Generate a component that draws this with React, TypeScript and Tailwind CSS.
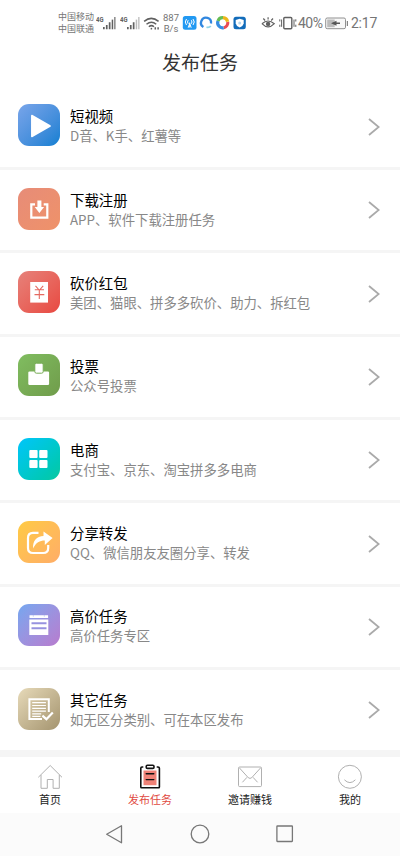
import React from 'react';

type Kind = 'video' | 'download' | 'packet' | 'vote' | 'shop' | 'share' | 'premium' | 'other';

const tasks: { kind: Kind; title: string; detail: string; tile: string }[] = [
  { kind: 'video', title: '短视频', detail: 'D音、K手、红薯等', tile: 'from-[#78a5ea] to-[#087fd2]' },
  { kind: 'download', title: '下载注册', detail: 'APP、软件下载注册任务', tile: 'from-[#e78c78] to-[#ef9269]' },
  { kind: 'packet', title: '砍价红包', detail: '美团、猫眼、拼多多砍价、助力、拆红包', tile: 'from-[#e6817a] to-[#e84740]' },
  { kind: 'vote', title: '投票', detail: '公众号投票', tile: 'from-[#80bd60] to-[#709c4b]' },
  { kind: 'shop', title: '电商', detail: '支付宝、京东、淘宝拼多多电商', tile: 'from-[#00c5fb] to-[#0bc8a0]' },
  { kind: 'share', title: '分享转发', detail: 'QQ、微信朋友友圈分享、转发', tile: 'from-[#ffca42] to-[#ffad67]' },
  { kind: 'premium', title: '高价任务', detail: '高价任务专区', tile: 'from-[#73a7f0] to-[#b77bce]' },
  { kind: 'other', title: '其它任务', detail: '如无区分类别、可在本区发布', tile: 'from-[#e7dab9] to-[#a4946f]' },
];

function Glyph({ kind }: { kind: Kind }) {
  return (
    <svg viewBox="0 0 42 42" className="block size-[42px]" fill="none" stroke="white" strokeWidth="2">
      {kind === 'video' && <path d="M13.8 11.5v21l18.3-10.5z" fill="white" strokeWidth="1.5" strokeLinejoin="round" />}
      {kind === 'download' && (
        <>
          <path d="M17 16.3h-3.7v13.4h16V16.3h-3.6" strokeWidth="2.2" />
          <path d="M19.4 12.4h4v6.6h2.7L21.4 25l-4.7-6h2.7z" fill="white" stroke="none" />
        </>
      )}
      {kind === 'packet' && (
        <>
          <path d="M12.2 11h17.8v20.6H12.2z" fill="white" stroke="none" />
          <path d="m17.5 14.8 3.2 3.7M25.2 14.8l-3.2 3.7M16.8 18.8h9.2M16.5 23.6h9.8M21.3 18.5v9.5" stroke="#e56a61" strokeWidth="1.1" />
        </>
      )}
      {kind === 'vote' && (
        <>
          <rect x="10.3" y="17.6" width="20.8" height="13.3" rx="1.2" fill="white" stroke="none" />
          <rect x="16.8" y="9.2" width="8.4" height="10" rx="1.6" fill="white" stroke="#76ac54" strokeWidth="1" />
        </>
      )}
      {kind === 'shop' && (
        <g fill="white" stroke="none">
          <rect x="11.3" y="12" width="8.3" height="7.9" rx="1" />
          <rect x="21.2" y="12" width="8.3" height="7.9" rx="1" />
          <rect x="11.3" y="21.9" width="8.3" height="8" rx="1" />
          <rect x="21.2" y="21.9" width="8.3" height="8" rx="1" />
        </g>
      )}
      {kind === 'share' && (
        <>
          <path d="M20.5 11.9H15q-5 0-5 5v10.1q0 5 5 5h10.2q5 0 5-5V24" strokeWidth="2.2" />
          <path d="M25.5 10.6 34.6 17l-7.8 6.9v-4.4c-5 0-9 1.8-11.6 8-.9-7.7 3.6-12.5 10.3-12.6z" fill="white" stroke="none" />
        </>
      )}
      {kind === 'premium' && (
        <>
          <path d="M11.5 11.3h18.6v2.8H11.5zM11.3 15.4h19v15.5h-19z" fill="white" stroke="none" />
          <path d="M15.3 11.3v1.2m11-1.2v1.2" stroke="#b6c2ee" strokeWidth="1" />
          <path d="M13.5 19.2h15M13.5 24.3h15" stroke="#9792df" strokeWidth="1.9" />
        </>
      )}
      {kind === 'other' && (
        <>
          <path d="M24 31H11.4V11.2h19.4V24" />
          <path d="M14.2 14.7h13.7M14.2 17.5h13.7M14.2 20.3h13.7M14.2 23.1h13.7M14.2 25.9h9M14.2 28.3h8.3" strokeWidth="1.2" />
          <path d="m24.4 27.7 4 3.5 6.4-6.6" strokeWidth="2.2" />
        </>
      )}
    </svg>
  );
}

function Signal({ weak = false }: { weak?: boolean }) {
  return (
    <svg viewBox="0 0 20 14" className="h-3.5 w-5 shrink-0" fill="#606060">
      <text x="0" y="5.8" fontSize="7" fontWeight="700" fontFamily="Roboto, sans-serif" textLength="7.5" lengthAdjust="spacingAndGlyphs">4G</text>
      <path d="M7 11h1.7v2.3H7zm2.9-2h1.7v4.3H9.9zm2.9-2.8h1.7v7.1h-1.7z" />
      <path d="M15.7 3.6h1.5v9.7h-1.5z" fill={weak ? '#bbb' : '#606060'} />
      <path d="M18.2 1h1.3v12.3h-1.3z" fill={weak ? '#bbb' : '#777'} />
    </svg>
  );
}

function StatusBar() {
  return (
    <div className="flex h-11 items-center pt-[2px] pl-[58px] text-[#757575]">
      <div className="w-[38px] shrink-0 whitespace-nowrap text-[9px] leading-[12px]">
        <div>中国移动</div>
        <div>中国联通</div>
      </div>
      <div className="flex gap-[4px]"><Signal /><Signal weak /></div>
      <svg viewBox="0 0 18 15" className="ml-[3px] h-[15px] w-[17px] shrink-0" fill="none" stroke="#606060" strokeWidth="1.6">
        <path d="M1.2 5.2Q8.7-1 16.5 5.2M3.7 8.3Q9 4 14 8.3M6.2 11Q9 8.5 11.6 11" />
        <circle cx="8.9" cy="13" r=".9" fill="#606060" stroke="none" />
        <path d="M13 11.5v2.3M16 11.5v2.3" />
      </svg>
      <div className="ml-[2px] w-[18px] shrink-0 text-center font-[Roboto,sans-serif] text-[9.5px] leading-[11px]">
        <div>887</div><div>B/s</div>
      </div>
      <svg viewBox="0 0 66 16" className="ml-[2px] h-4 w-[66px] shrink-0" fill="none">
        <rect x=".8" y="1" width="13.7" height="13.7" rx="2.5" fill="#2299f2" />
        <path d="M4.5 4Q2 7 4.5 10M11 4Q13.5 7 11 10M6.2 5.2Q4.8 7 6.2 8.8M9.3 5.2Q10.7 7 9.3 8.8M7.7 7.5v5M6.2 12.7l1.5-4.2 1.5 4.2" stroke="white" strokeWidth="1" />
        <path d="M21.4 12A5 5 0 1 1 29 8.5" stroke="#3187df" strokeWidth="2.3" />
        <path d="M24.5 12.2q2.7.8 4.3-1.2" stroke="#8ed5ea" strokeWidth="1.8" />
        <g strokeWidth="3.2">
          <path d="M36 6a5 5 0 0 1 5-3.3" stroke="#65bd54" /><path d="M41 2.7a5 5 0 0 1 4.6 4" stroke="#edb51a" />
          <path d="M45.7 7a5 5 0 0 1-4 5.7" stroke="#e94b54" /><path d="M41.7 12.7A5 5 0 0 1 36 6" stroke="#378de1" />
        </g>
        <rect x="51.5" y="1.7" width="12.3" height="12.5" rx="2.5" fill="#126cba" />
        <path d="m57.7 3.8 4 1.2v3.4q-.5 2.6-4 4-3.5-1.4-4-4V5z" fill="white" />
        <circle cx="57.7" cy="7.9" r="1.5" fill="#b7d9ef" />
      </svg>
      <svg viewBox="0 0 36 16" className="ml-[13px] h-4 w-9 shrink-0" fill="none" stroke="#606060" strokeWidth="1.2">
        <path d="M1 8.7q6-5.4 12.3 0-6.2 6.5-12.3 0M7.1 2.2v2.4M2.3 3.5l1.8 2M12 3.5l-1.8 2" />
        <circle cx="7.1" cy="8.9" r="1.6" fill="#606060" />
        <rect x="22.8" y="2.5" width="8" height="11.3" rx="1" strokeWidth="1.4" />
        <path d="M20.6 4.5v7.3M33 4.5v7.3M18.8 4.3v2.2M18.8 9.7v2.2M34.8 4.3v2.2M34.8 9.7v2.2" strokeWidth="1" />
      </svg>
      <span className="ml-[1px] w-[26px] shrink-0 font-[Roboto,sans-serif] text-[14px] leading-none tracking-[-0.5px]">40%</span>
      <svg viewBox="0 0 24 13" className="ml-[1px] h-[13px] w-6 shrink-0">
        <rect x=".7" y="1" width="19.8" height="10.7" rx="1.5" fill="#f8f8f8" stroke="#909090" />
        <path d="M2.2 2.5h7.5v7.7H2.2z" fill="#bbb" />
        <path d="M6 6.3 11.5 3.8v1.7H15v1.5h-3.5v1.8z" fill="#555" />
        <path d="M21.8 4h1.1v5h-1.1z" fill="#777" />
      </svg>
      <span className="ml-[2px] shrink-0 font-[Roboto,sans-serif] text-[14px] leading-none tracking-[-0.25px]">2:17</span>
    </div>
  );
}

function TabIcon({ name }: { name: string }) {
  if (name === '发布任务') {
    return (
      <svg viewBox="0 0 26 26" className="size-[26px]" fill="none" stroke="#111" strokeWidth="1.6">
        <path d="M6.5 6.5h13v14.7h-13z" fill="#f08277" stroke="none" />
        <path d="M6.3 3H5Q3.8 3 3.8 4.2V23q0 .7.7.7h17.2q.7 0 .7-.7V4.2Q22.4 3 21 3h-1.3" />
        <rect x="9.2" y="1.2" width="7.8" height="3.2" rx="1.2" fill="white" />
        <path d="M9.2 9.8h7.6M9.2 15.6h7.6" strokeWidth="1.4" strokeLinecap="round" />
      </svg>
    );
  }
  return (
    <svg viewBox="0 0 26 26" className="size-[26px]" fill="none" stroke="#b0b0b0" strokeWidth="1">
      {name === '首页' && <path d="M1.3 13.3 13.2 1.5 25 13.3M4 11v13.3h6.3v-8.8h5.8v8.8h6.2V11" />}
      {name === '邀请赚钱' && (
        <><rect x="1.5" y="3" width="23" height="19.6" rx="1.2" /><path d="m2.3 3.8 8.9 9.8q1.8 1.7 3.6 0l8.9-9.8M5.4 18.3l4.6-5M20.6 18.3l-4.6-5" /></>
      )}
      {name === '我的' && <><circle cx="12.9" cy="12.8" r="11.5" /><path d="M7.4 15.8q5.5 5.6 11 0" /></>}
    </svg>
  );
}

export default function App() {
  return (
    <div className="flex h-[856px] w-[400px] flex-col overflow-hidden bg-white font-['Noto_Sans_CJK_SC',sans-serif]">
      <StatusBar />
      <h1 className="flex h-[42.6px] shrink-0 items-start justify-center pt-[4px] text-[19px] leading-[28px] text-[#333]">发布任务</h1>
      <main className="h-[670.4px] shrink-0 bg-[#f5f5f5]">
        {tasks.map((task) => (
          <button key={task.kind} className="flex h-[83.35px] w-full items-start border-b-[3.35px] border-[#f5f5f5] bg-white px-[18px] pt-[17.8px] text-left">
            <span className={`size-[42px] shrink-0 rounded-[11px] bg-linear-to-br ${task.tile}`}><Glyph kind={task.kind} /></span>
            <span className="ml-[10px] flex flex-1 flex-col pt-[2px]">
              <span className="text-[14.4px] leading-5 text-black">{task.title}</span>
              <span className="text-[13.35px] leading-5 text-[#888]">{task.detail}</span>
            </span>
            <svg viewBox="0 0 12 20" className="mt-[12.5px] mr-[2px] h-5 w-3" fill="none" stroke="#aaa" strokeWidth="1.8"><path d="m1 2 9.7 8L1 18" /></svg>
          </button>
        ))}
      </main>
      <nav className="grid h-[56px] shrink-0 grid-cols-4">
        {['首页', '发布任务', '邀请赚钱', '我的'].map((name) => (
          <button key={name} className={`flex flex-col items-center pt-[7px] text-[11px] leading-[18px] ${name === '发布任务' ? 'text-[#df4941]' : 'text-[#222]'}`}>
            <TabIcon name={name} />
            <span>{name}</span>
          </button>
        ))}
      </nav>
      <footer className="flex flex-1 justify-center gap-[66px] bg-[#fbfbfb] pt-[11px]">
        <svg viewBox="0 0 20 20" className="size-5" fill="none" stroke="#777" strokeWidth="1.3"><path d="M17.5 1.8v17L2.7 10.3z" strokeLinejoin="round" /></svg>
        <svg viewBox="0 0 20 20" className="size-5" fill="none" stroke="#777" strokeWidth="1.3"><circle cx="10" cy="10" r="8.8" /></svg>
        <svg viewBox="0 0 20 20" className="size-5" fill="none" stroke="#777" strokeWidth="1.3"><rect x="0.9" y="2" width="15.5" height="15.5" rx=".5" /></svg>
      </footer>
    </div>
  );
}
